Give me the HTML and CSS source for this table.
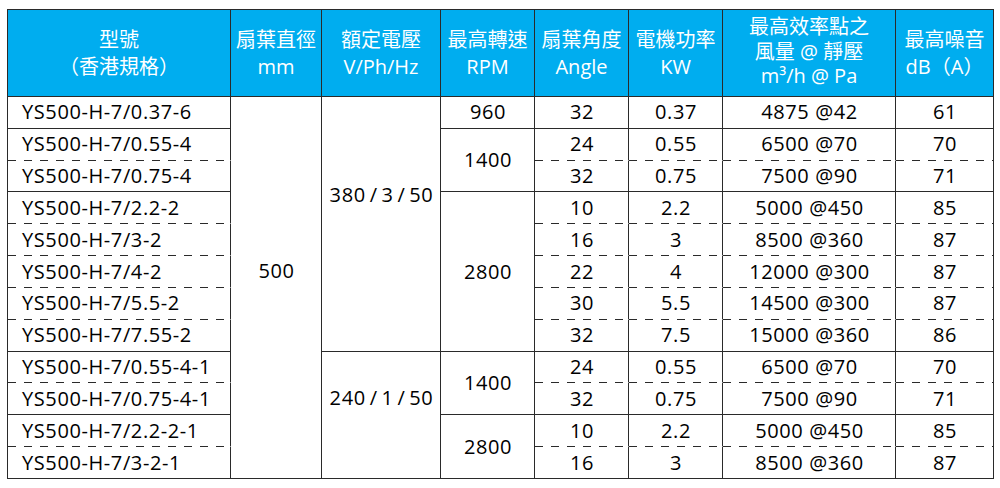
FILE: index.html
```html
<!DOCTYPE html>
<html lang="zh-Hant">
<head>
<meta charset="utf-8">
<title>YS500-H-7 規格表</title>
<link rel="stylesheet" href="styles.css">
</head>
<body>
<table class="spec">
  <colgroup>
    <col class="w-model"><col class="w-dia"><col class="w-volt"><col class="w-rpm"><col class="w-ang"><col class="w-kw"><col class="w-flow"><col class="w-db">
  </colgroup>
  <thead>
    <tr>
      <th>型號<br>（香港規格）</th>
      <th>扇葉直徑<br>mm</th>
      <th>額定電壓<br>V/Ph/Hz</th>
      <th>最高轉速<br>RPM</th>
      <th>扇葉角度<br>Angle</th>
      <th>電機功率<br>KW</th>
      <th class="three">最高效率點之<br>風量 @ 靜壓<br>m³/h @ Pa</th>
      <th>最高噪音<br>dB（A）</th>
    </tr>
  </thead>
  <tbody>
    <tr>
      <td class="model">YS500-H-7/0.37-6</td>
      <td rowspan="12" class="span dia">500</td>
      <td rowspan="8" class="span volt1">380&thinsp;/&thinsp;3&thinsp;/&thinsp;50</td>
      <td class="span">960</td>
      <td>32</td><td>0.37</td><td>4875 @42</td><td>61</td>
    </tr>
    <tr class="dash">
      <td class="model">YS500-H-7/0.55-4</td>
      <td rowspan="2" class="span">1400</td>
      <td>24</td><td>0.55</td><td>6500 @70</td><td>70</td>
    </tr>
    <tr>
      <td class="model">YS500-H-7/0.75-4</td>
      <td>32</td><td>0.75</td><td>7500 @90</td><td>71</td>
    </tr>
    <tr class="dash">
      <td class="model">YS500-H-7/2.2-2</td>
      <td rowspan="5" class="span">2800</td>
      <td>10</td><td>2.2</td><td>5000 @450</td><td>85</td>
    </tr>
    <tr class="dash">
      <td class="model">YS500-H-7/3-2</td>
      <td>16</td><td>3</td><td>8500 @360</td><td>87</td>
    </tr>
    <tr class="dash">
      <td class="model">YS500-H-7/4-2</td>
      <td>22</td><td>4</td><td>12000 @300</td><td>87</td>
    </tr>
    <tr class="dash">
      <td class="model">YS500-H-7/5.5-2</td>
      <td>30</td><td>5.5</td><td>14500 @300</td><td>87</td>
    </tr>
    <tr>
      <td class="model">YS500-H-7/7.55-2</td>
      <td>32</td><td>7.5</td><td>15000 @360</td><td>86</td>
    </tr>
    <tr class="dash">
      <td class="model">YS500-H-7/0.55-4-1</td>
      <td rowspan="4" class="span volt2">240&thinsp;/&thinsp;1&thinsp;/&thinsp;50</td>
      <td rowspan="2" class="span">1400</td>
      <td>24</td><td>0.55</td><td>6500 @70</td><td>70</td>
    </tr>
    <tr>
      <td class="model">YS500-H-7/0.75-4-1</td>
      <td>32</td><td>0.75</td><td>7500 @90</td><td>71</td>
    </tr>
    <tr class="dash">
      <td class="model">YS500-H-7/2.2-2-1</td>
      <td rowspan="2" class="span">2800</td>
      <td>10</td><td>2.2</td><td>5000 @450</td><td>85</td>
    </tr>
    <tr>
      <td class="model">YS500-H-7/3-2-1</td>
      <td>16</td><td>3</td><td>8500 @360</td><td>87</td>
    </tr>
  </tbody>
</table>
</body>
</html>
```
FILE: styles.css
```css
html, body {
  background: #ffffff;
}
body {
  margin: 9px 6px 0 7px;
  font-family: "Open Sans", "Noto Sans CJK TC", sans-serif;
  color: #000;
}
.spec {
  table-layout: fixed;
  width: 987px;
  border-collapse: separate;
  border-spacing: 0;
  border-top: 1px solid #2a2a2a;
  border-left: 1px solid #2a2a2a;
}
.w-model { width: 223px; }
.w-dia { width: 91px; }
.w-volt { width: 119px; }
.w-rpm { width: 94px; }
.w-ang { width: 94px; }
.w-kw { width: 94px; }
.w-flow { width: 173px; }
.w-db { width: 98px; }

.spec th {
  height: 87px;
  box-sizing: border-box;
  padding: 0;
  background: #00adef;
  color: #fff;
  font-weight: normal;
  font-size: 20px;
  line-height: 27px;
  text-align: center;
  vertical-align: middle;
  border-right: 1px solid #2a2a2a;
  border-bottom: 1px solid #2a2a2a;
  font-family: "Open Sans", "Noto Sans CJK TC", sans-serif;
}
.spec th.three {
  line-height: 24.5px;
  padding-bottom: 2px;
}
.spec td {
  height: 31.83px;
  box-sizing: border-box;
  padding: 0 0 0 1px;
  font-size: 20px;
  letter-spacing: 0.6px;
  line-height: 24px;
  text-align: center;
  vertical-align: middle;
  border-right: 1px solid #2a2a2a;
  border-bottom: 1px solid #2a2a2a;
  white-space: nowrap;
}
.spec td.model {
  text-align: left;
  padding-left: 14px;
}
.spec .dash td:not(.span) {
  border-bottom-color: transparent;
  background: repeating-linear-gradient(to right, #2a2a2a 0 8px, transparent 8px 16px) left bottom / 100% 1px no-repeat border-box;
}
.spec td.dia {
  padding-bottom: 32px;
}
.spec td.volt1 {
  padding-bottom: 57px;
}
.spec td.volt2 {
  padding-bottom: 33px;
}
```
